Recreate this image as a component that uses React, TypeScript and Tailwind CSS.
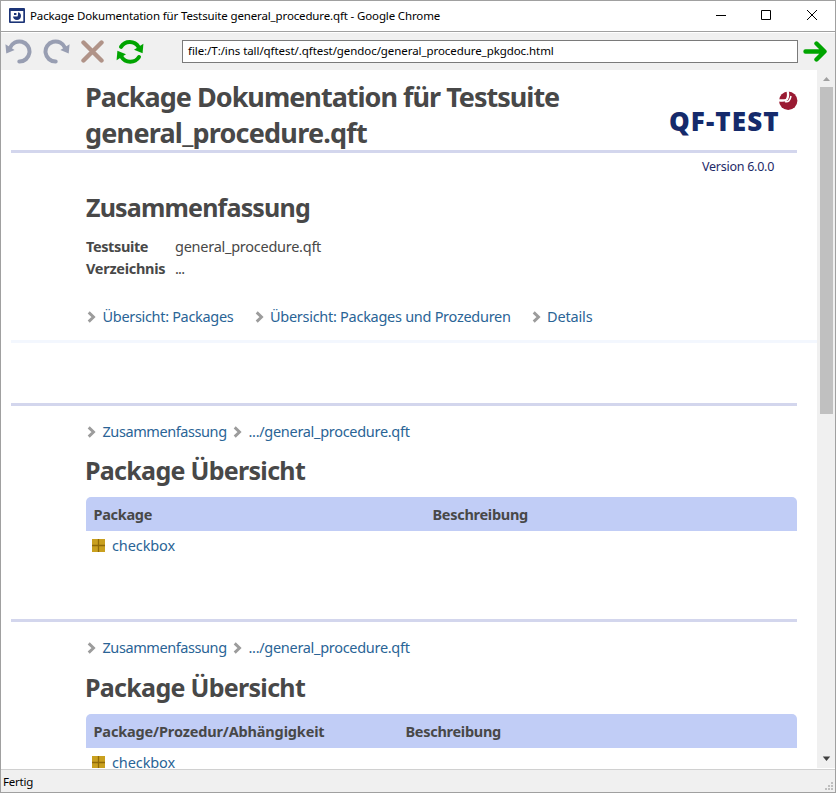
import type { ReactNode } from "react";

function AppIcon() {
  return (
    <svg width="16" height="15" viewBox="0 0 16 15" className="-mt-px shrink-0">
      <rect x="0" y="0" width="16" height="15" rx="1" fill="#1c3477" />
      <rect x="1.7" y="3" width="12.6" height="10.4" fill="#fff" />
      <path d="M9 4.2A4 4 0 1 1 4 8.6H8.2Q9.2 8.4 9 4.2Z" fill="#1c3477" />
      <rect x="5" y="5" width="2.4" height="2" fill="#1c3477" />
    </svg>
  );
}

function Undo() {
  return (
    <svg width="27" height="26" viewBox="0 0 27 26" className="shrink-0">
      <path d="M5 9.4A10.1 10.1 0 1 1 14.3 23.2" fill="none" stroke="#989eb2" strokeWidth="4" strokeLinecap="round" transform="translate(0 -.6)" />
      <path d="M.4 5.2L1.3 14.4L9.6 11.1Z" fill="#989eb2" />
    </svg>
  );
}

function Redo() {
  return (
    <svg width="27" height="26" viewBox="0 0 27 26" className="shrink-0">
      <g transform="matrix(-1 0 0 1 27 0)">
        <path d="M5 9.4A10.1 10.1 0 1 1 14.3 23.2" fill="none" stroke="#989eb2" strokeWidth="4" strokeLinecap="round" transform="translate(0 -.6)" />
        <path d="M.4 5.2L1.3 14.4L9.6 11.1Z" fill="#989eb2" />
      </g>
    </svg>
  );
}

function Stop() {
  return (
    <svg width="23" height="23" viewBox="0 0 23 23" className="shrink-0">
      <path d="M2.5 2.5L20.5 20.5M20.5 2.5L2.5 20.5" stroke="#b09388" strokeWidth="4.4" strokeLinecap="round" />
    </svg>
  );
}

function Reload() {
  return (
    <svg width="28" height="26" viewBox="0 0 28 26" className="shrink-0">
      <g fill="none" stroke="#00a400" strokeWidth="4" strokeLinecap="round">
        <path d="M5 7.8A10.4 10.4 0 0 1 22.6 8" />
        <path d="M23 18A10.4 10.4 0 0 1 5.4 17.8" />
      </g>
      <path d="M27.4 4.8L26.6 14.2L18 10.8Z" fill="#00a400" />
      <path d="M.6 21.2L1.4 11.8L10 15.2Z" fill="#00a400" />
    </svg>
  );
}

function Chevron() {
  return (
    <svg width="9" height="12" viewBox="0 0 9 12" className="shrink-0">
      <path d="M1.7 1.4L6.5 6L1.7 10.6" fill="none" stroke="#9c9c9c" strokeWidth="2.9" />
    </svg>
  );
}

function PackageIcon() {
  return (
    <svg width="13" height="13" viewBox="0 0 13 13" className="shrink-0">
      <rect width="13" height="13" fill="#c9a01f" />
      <path d="M6.5 0V13M0 6.5H13" stroke="#8f6a08" strokeWidth="1.3" />
    </svg>
  );
}

function Logo() {
  return (
    <div className="flex h-[50px] w-[128px] items-start text-[#152a6b]">
      <span className="mt-[20px] whitespace-pre font-['Open_Sans','Noto_Sans',sans-serif] text-[26px] font-extrabold leading-[36px] tracking-[1.1px]">QF-TEST</span>
      <svg width="20" height="20" viewBox="0 0 20 20" className="-ml-[2px] mt-[8px] shrink-0">
        <circle cx="10.2" cy="9.8" r="9.2" fill="#9a1b33" />
        <path d="M9.6 0C10.8 5 9.4 8.6 8 9C6 9.9 3.5 9.4 0 9.4" fill="none" stroke="#fff" strokeWidth="2.3" />
        <path d="M7 10.6Q11.8 12 13 5" fill="none" stroke="#fff" strokeWidth="1.5" />
      </svg>
    </div>
  );
}

const bodyText = "whitespace-pre text-[14.5px] leading-[22px]";

function Crumb({ children, className }: { children: ReactNode; className: string }) {
  return (
    <span className="flex items-center">
      <span className="mr-[6.5px] mt-[2px] flex"><Chevron /></span>
      <a className={bodyText + " text-[#2a6496] " + className}>{children}</a>
    </span>
  );
}

function Section({ first, firstWidth, firstTracking, heading }: { first: string; firstWidth: string; firstTracking: string; heading: string }) {
  return (
    <section className="mr-5">
      <div className="ml-[11px] h-[3px] bg-[#d3d6ed]" />
      <div className="ml-[86px] flex pl-px pt-[14px]">
        <div className="flex w-[146px]"><Crumb className="tracking-[-0.42px]">Zusammenfassung</Crumb></div>
        <Crumb className="tracking-[-0.3px]">.../general_procedure.qft</Crumb>
      </div>
      <h2 className={"ml-[85px] whitespace-pre text-[25px] font-bold leading-[34px] tracking-[-0.7px] " + heading}>Package Übersicht</h2>
      <div className="ml-[86px] mt-[10px] flex h-[34px] rounded-t-[5px] bg-[#c1cdf6] pl-[7.5px] text-[14.5px] font-bold leading-[35px]">
        <span className={"whitespace-pre " + firstTracking + " " + firstWidth}>{first}</span>
        <span className="tracking-[-0.28px]">Beschreibung</span>
      </div>
      <div className="ml-[92px] flex items-center gap-[7px] pt-[3px]">
        <PackageIcon />
        <a className={bodyText + " tracking-[-0.1px] text-[#2a6496]"}>checkbox</a>
      </div>
    </section>
  );
}

export default function App() {
  return (
    <div className="flex h-[793px] w-[836px] flex-col overflow-hidden border border-[#a0a0a0] bg-white font-['Noto_Sans','Open_Sans',sans-serif] text-[#484848]">
      <header className="flex h-[31px] shrink-0 items-center border-b border-[#a0a0a0] pl-2 text-black">
        <AppIcon />
        <span className="ml-[5px] flex-1 whitespace-pre text-[11.5px] tracking-[-0.14px]">Package Dokumentation für Testsuite general_procedure.qft - Google Chrome</span>
        <svg width="120" height="30" viewBox="0 0 120 30" fill="none" stroke="#000" className="shrink-0">
          <path d="M1 14.5H11M46.5 9.5H55.5V18.5H46.5ZM92 9L102 19M102 9L92 19" />
        </svg>
      </header>
      <div className="flex h-[38px] shrink-0 items-center border-t border-white bg-[#f0f0f0] pl-[4px] text-black">
        <Undo />
        <span className="ml-[11px] flex"><Redo /></span>
        <span className="ml-[11px] flex"><Stop /></span>
        <span className="ml-[12px] flex"><Reload /></span>
        <div className="ml-[38px] h-[23px] w-[616px] whitespace-pre border border-[#7a7a7a] bg-white pl-[5px] text-[11.5px] leading-[20px] tracking-[-0.07px]">file:/T:/ins tall/qftest/.qftest/gendoc/general_procedure_pkgdoc.html</div>
        <svg width="25" height="22" viewBox="0 0 25 22" className="ml-[5px] shrink-0">
          <path d="M2.5 10.5H21M13.5 2.5L21.5 10.5L13.5 18.5" fill="none" stroke="#00a400" strokeWidth="4.4" strokeLinecap="round" strokeLinejoin="round" />
        </svg>
      </div>
      <div className="flex h-[698px] shrink-0">
        <main className="-ml-px w-[817px] overflow-hidden">
          <div className="ml-[11px] mr-5 flex h-[83px] justify-between border-b-[3px] border-[#d3d6ed]">
            <h1 className="ml-[74px] mt-[9px] h-[71px] whitespace-pre text-[27px] font-bold leading-[36px]">
              <span className="block tracking-[-1px]">Package Dokumentation für Testsuite</span>
              <span className="block tracking-[-0.78px]">general_procedure.qft</span>
            </h1>
            <div className="mt-[13px]"><Logo /></div>
          </div>
          <div className="ml-[702px] mt-[4px] whitespace-pre text-[12.5px] leading-[19px] tracking-[-0.25px] text-[#1e2a68]">Version 6.0.0</div>
          <h2 className="ml-[86px] mt-[14px] text-[25px] font-bold leading-[34px] tracking-[-0.82px]">Zusammenfassung</h2>
          <dl className="ml-[86px] mt-[11px] grid grid-cols-[89px_1fr] whitespace-pre text-[14.5px] leading-[22px]">
            <dt className="font-bold tracking-[-0.39px]">Testsuite</dt>
            <dd className="tracking-[-0.26px]">general_procedure.qft</dd>
            <dt className="font-bold tracking-[-0.28px]">Verzeichnis</dt>
            <dd className="tracking-[-0.8px]">...</dd>
          </dl>
          <nav className="ml-[87px] mt-[26px] flex">
            <div className="w-[167.5px]"><Crumb className="tracking-[-0.32px]">Übersicht: Packages</Crumb></div>
            <div className="w-[277px]"><Crumb className="tracking-[-0.28px]">Übersicht: Packages und Prozeduren</Crumb></div>
            <Crumb className="tracking-[-0.15px]">Details</Crumb>
          </nav>
          <div className="mb-[60px] ml-[11px] mt-[13px] h-[3px] bg-[#f3f7fe]" />
          <Section first="Package" firstWidth="w-[339px]" firstTracking="tracking-[-0.3px]" heading="mt-[11px]" />
          <div className="mt-[63px]">
            <Section first="Package/Prozedur/Abhängigkeit" firstWidth="w-[312px]" firstTracking="tracking-[-0.15px]" heading="mt-[12px]" />
          </div>
        </main>
        <aside className="flex w-[18px] shrink-0 flex-col items-center bg-[#f0f0f0]">
          <svg width="9" height="17" viewBox="0 0 9 17" className="shrink-0"><path d="M1 11L4.5 7L8 11Z" fill="#a0a0a0" /></svg>
          <div className="h-[327px] w-[13px] bg-[#c0c0c0]" />
          <svg width="9" height="17" viewBox="0 0 9 17" className="mt-auto shrink-0"><path d="M.8 5.5H8.2L4.5 10Z" fill="#404040" /></svg>
        </aside>
      </div>
      <footer className="mt-px flex flex-1 justify-between border-t border-[#d0d0d0] bg-[#f0f0f0] pl-[2px] text-black">
        <span className="text-[11.5px] leading-[23px] tracking-[-0.2px]">Fertig</span>
        <svg width="11" height="22" viewBox="0 0 11 22" fill="#bfbfbf">
          <path d="M7 12h2v2H7zM4 15h2v2H4zM7 15h2v2H7zM1 18h2v2H1zM4 18h2v2H4zM7 18h2v2H7z" />
        </svg>
      </footer>
    </div>
  );
}
